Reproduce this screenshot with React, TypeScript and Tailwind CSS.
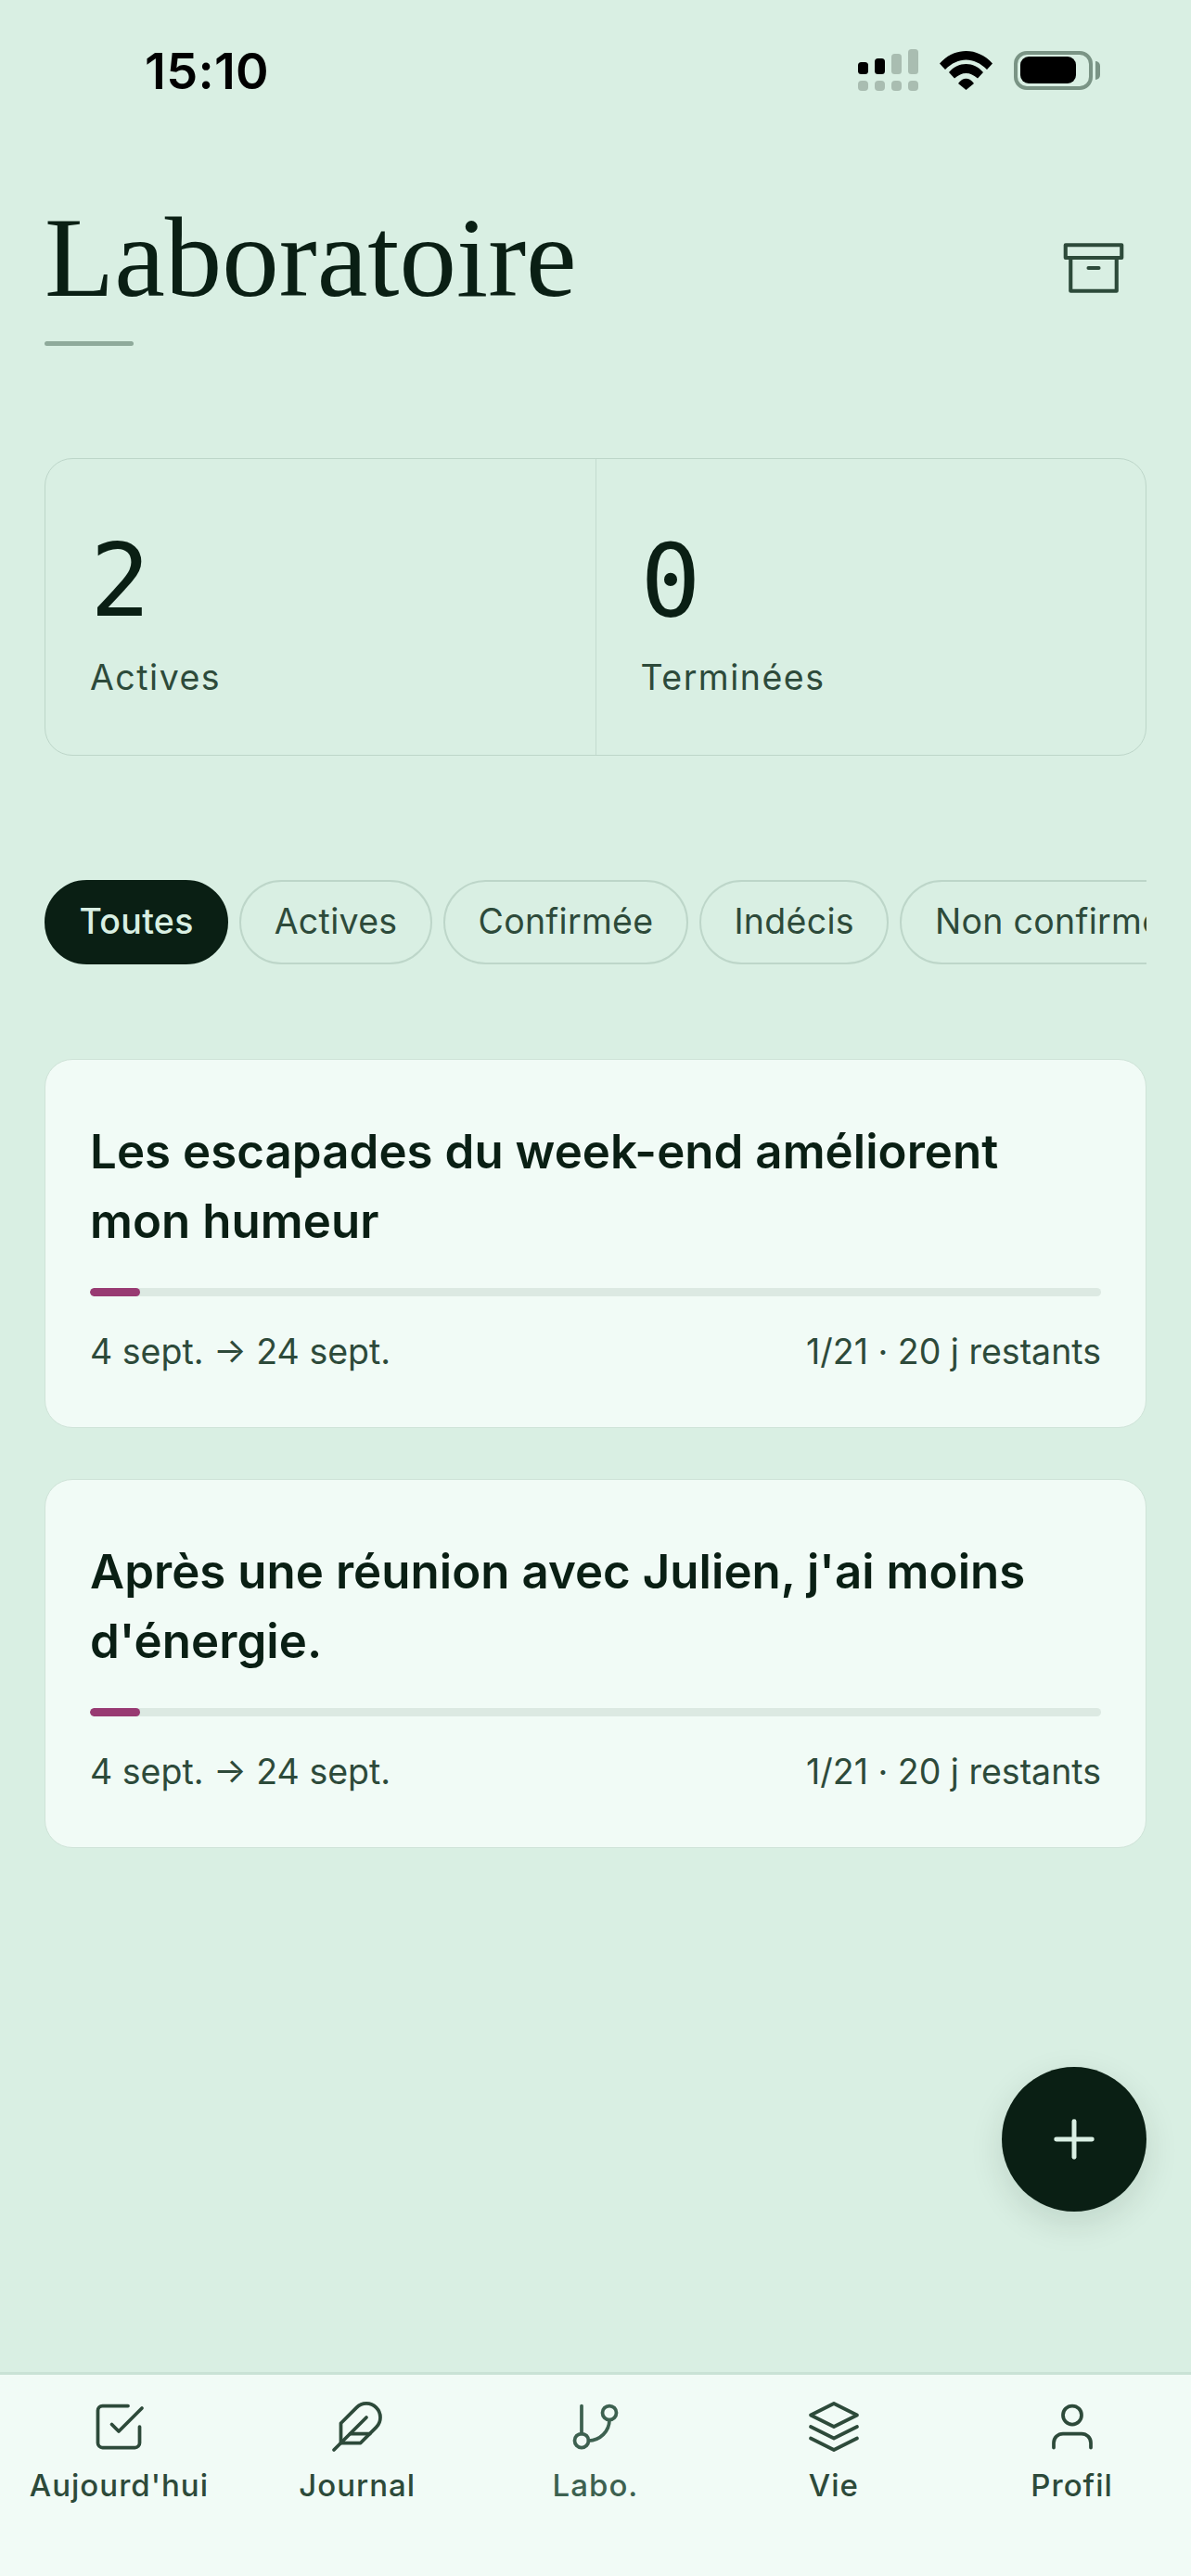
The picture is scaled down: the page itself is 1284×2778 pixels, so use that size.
import React from 'react';
import { FiArchive, FiCheckSquare, FiFeather, FiGitBranch, FiLayers, FiPlus, FiUser } from 'react-icons/fi';

const chips = ['Toutes', 'Actives', 'Confirmée', 'Indécis', 'Non confirmée'];

const hypotheses = [
  { title: "Les escapades du week-end améliorent mon humeur" },
  { title: "Après une réunion avec Julien, j'ai moins d'énergie." },
];

const tabs = [
  { label: "Aujourd'hui", icon: FiCheckSquare, color: 'text-[#2d4a3a]' },
  { label: 'Journal', icon: FiFeather, color: 'text-[#2d4a3a]' },
  { label: 'Labo.', icon: FiGitBranch, color: 'text-[#3d6150]' },
  { label: 'Vie', icon: FiLayers, color: 'text-[#2d4a3a]' },
  { label: 'Profil', icon: FiUser, color: 'text-[#2d4a3a]' },
];

const StatusIcons = () => (
  <div className="flex items-center">
    <svg width="65" height="45" viewBox="0 0 65 45" className="fill-[#a9bdb1]">
      <rect x="0" y="14" width="11" height="13" rx="3.5" fill="#000" />
      <rect x="18" y="10" width="11" height="17" rx="3.5" fill="#000" />
      <rect x="36" y="5" width="11" height="22" rx="3.5" />
      <rect x="54" y="0" width="11" height="27" rx="3.5" />
      <rect x="0" y="34" width="11" height="11" rx="4" />
      <rect x="18" y="34" width="11" height="11" rx="4" />
      <rect x="36" y="34" width="11" height="11" rx="4" />
      <rect x="54" y="34" width="11" height="11" rx="4" />
    </svg>
    <svg width="57" height="42" viewBox="0 0 57 42" className="ml-[23px]">
      <path d="M0 13.5C16-4.5 41-4.5 57 13.5L51 20C37 6 20 6 6 20Z" />
      <path d="M10 23C20 11 37 11 47 23L41 29.5C33 22 24 22 16 29.5Z" />
      <path d="M20 35C25 28 32 28 37 35L28.5 42Z" />
    </svg>
    <div className="ml-[23px] flex h-[42px] w-[85px] items-center rounded-[14px] border-[4px] border-[#7a9485] pl-[3px]">
      <div className="h-[29px] w-[60px] rounded-[9px] bg-black" />
    </div>
    <div className="ml-[3px] h-[20px] w-[5px] rounded-r-full bg-[#7a9485]" />
  </div>
);

const HypothesisCard = ({ title }: { title: string }) => (
  <div className="h-[398px] rounded-[30px] border border-[#cfe3d8] bg-[#f1fbf6] px-[48px] pt-[62px]">
    <h2 className="font-semibold text-[51px] leading-[74.5px] tracking-[0.04px] text-[#0a1f14]">{title}</h2>
    <div className="mt-[35px] h-[9px] w-full overflow-hidden rounded-full bg-[#dce9e2]">
      <div className="h-full w-[54px] rounded-full bg-[#983a72]" />
    </div>
    <div className="mt-[31px] flex justify-between text-[37.5px] leading-[58px] text-[#2d4a3a]">
      <span>4 sept. → 24 sept.</span>
      <span>1/21 · 20 j restants</span>
    </div>
  </div>
);

export default function App() {
  return (
    <div className="relative flex h-[2778px] w-[1284px] flex-col overflow-hidden bg-[#d9efe3] font-['Inter',sans-serif]">
      <div className="flex h-[150px] items-start justify-between pl-[156px] pr-[98px] pt-[42px]">
        <span className="text-[54px] font-semibold leading-[70px] tracking-[0.3px] text-black">15:10</span>
        <div className="pt-[11px]">
          <StatusIcons />
        </div>
      </div>

      <div className="flex items-center justify-between pl-[48px] pr-[72px] pt-[58px]">
        <h1 className="font-['Liberation_Serif',serif] text-[123px] leading-[140px] text-[#0a1f14]">Laboratoire</h1>
        <FiArchive size={66} strokeWidth={1.5} className="mt-[22px] text-[#2d4a3a]" />
      </div>
      <div className="ml-[48px] mt-[20px] h-[5px] w-[96px] rounded-full bg-[#8faa9b]" />

      <div className="mx-[48px] mt-[121px] flex h-[321px] rounded-[30px] border border-[#bdd6c9]">
        <div className="flex-1 border-r border-[#c4dccf] pl-[48px] pt-[67px]">
          <div className="font-['DejaVu_Sans_Mono',monospace] text-[108px] leading-[130px] text-[#0a1f14]">2</div>
          <div className="mt-[10px] text-[37.5px] tracking-[1.5px] leading-[58px] text-[#2d4a3a]">Actives</div>
        </div>
        <div className="flex-1 pl-[48px] pt-[67px]">
          <div className="font-['DejaVu_Sans_Mono',monospace] text-[108px] leading-[130px] text-[#0a1f14]">0</div>
          <div className="mt-[10px] text-[37.5px] tracking-[1.5px] leading-[58px] text-[#2d4a3a]">Terminées</div>
        </div>
      </div>

      <div className="mx-[48px] mt-[134px] flex gap-[12px] overflow-hidden">
        {chips.map((chip, i) => (
          <div
            key={chip}
            className={`flex h-[91px] shrink-0 items-center rounded-full border-[2px] px-[35.5px] text-[37.5px] tracking-[0.3px] ${
              i === 0
                ? 'border-[#0a1f14] bg-[#0a1f14] font-medium text-[#d9efe3]'
                : 'border-[#bdd6c9] text-[#2d4a3a]'
            }`}
          >
            {chip}
          </div>
        ))}
      </div>

      <div className="mx-[48px] mt-[102px] flex flex-col gap-[55px]">
        {hypotheses.map((h) => (
          <HypothesisCard key={h.title} title={h.title} />
        ))}
      </div>

      <div className="absolute left-[1080px] top-[2229px] flex h-[156px] w-[156px] items-center justify-center rounded-full bg-[#0a1f14] shadow-[0_12px_36px_rgba(10,31,20,0.12)]">
        <FiPlus size={66} strokeWidth={1.8} className="text-[#d9efe3]" />
      </div>

      <div className="mt-auto flex h-[220px] border-t-[3px] border-[#c9e2d5] bg-[#f1fbf6] pt-[26px]">
        {tabs.map((tab) => (
          <div key={tab.label} className={`flex flex-1 flex-col items-center ${tab.color}`}>
            <tab.icon size={60} strokeWidth={1.5} />
            <span className="mt-[9px] text-[33px] font-medium leading-[48px] tracking-[1px]">{tab.label}</span>
          </div>
        ))}
      </div>
    </div>
  );
}
